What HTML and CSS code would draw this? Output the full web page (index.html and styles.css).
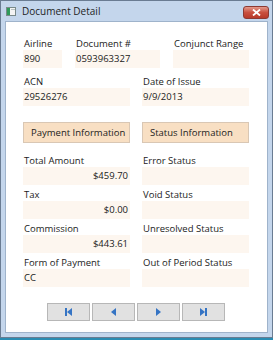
FILE: index.html
```html
<!DOCTYPE html>
<html lang="en">
<head>
  <meta charset="UTF-8">
  <title>Document Detail</title>
  <link rel="stylesheet" href="styles.css">
</head>
<body>
  <div class="window">
    <div class="titlebar">
      <svg class="app-icon" width="10" height="9" viewBox="0 0 10 9">
        <rect x="0.5" y="0.5" width="9" height="8" fill="#f4f4f4" stroke="#7a8a8a"/>
        <rect x="1" y="1" width="3" height="7" fill="#2e9a5a"/>
        <rect x="5" y="2" width="4" height="1" fill="#b9c3c3"/>
      </svg>
      <span class="title">Document Detail</span>
      <div class="close">
        <svg width="9" height="7" viewBox="0 0 9 7">
          <path d="M1 0.5 L8 6.5 M8 0.5 L1 6.5" stroke="#fff" stroke-width="1.8"/>
        </svg>
      </div>
    </div>

    <div class="client">
      <div class="row-three">
        <div class="field">
          <div class="label">Airline</div>
          <div class="value">890</div>
        </div>
        <div class="field">
          <div class="label">Document #</div>
          <div class="value">0593963327</div>
        </div>
        <div class="field">
          <div class="label">Conjunct Range</div>
          <div class="value"></div>
        </div>
      </div>

      <div class="row-two">
        <div class="field">
          <div class="label">ACN</div>
          <div class="value">29526276</div>
        </div>
        <div class="field">
          <div class="label">Date of Issue</div>
          <div class="value">9/9/2013</div>
        </div>
      </div>

      <div class="row-two tabs">
        <button class="tab">Payment Information</button>
        <button class="tab">Status Information</button>
      </div>

      <div class="row-two details">
        <div class="col">
          <div class="field">
            <div class="label">Total Amount</div>
            <div class="value num">$459.70</div>
          </div>
          <div class="field">
            <div class="label">Tax</div>
            <div class="value num">$0.00</div>
          </div>
          <div class="field">
            <div class="label">Commission</div>
            <div class="value num">$443.61</div>
          </div>
          <div class="field">
            <div class="label">Form of Payment</div>
            <div class="value">CC</div>
          </div>
        </div>
        <div class="col">
          <div class="field">
            <div class="label">Error Status</div>
            <div class="value"></div>
          </div>
          <div class="field">
            <div class="label">Void Status</div>
            <div class="value"></div>
          </div>
          <div class="field">
            <div class="label">Unresolved Status</div>
            <div class="value"></div>
          </div>
          <div class="field">
            <div class="label">Out of Period Status</div>
            <div class="value"></div>
          </div>
        </div>
      </div>

      <div class="nav">
        <button class="nav-btn" title="First">
          <svg width="9" height="8" viewBox="0 0 9 8"><rect x="1" y="0" width="2" height="8" fill="#3574c4"/><path d="M8 0 L3 4 L8 8 Z" fill="#3574c4"/></svg>
        </button>
        <button class="nav-btn" title="Previous">
          <svg width="9" height="8" viewBox="0 0 9 8"><path d="M7 0 L2 4 L7 8 Z" fill="#3574c4"/></svg>
        </button>
        <button class="nav-btn" title="Next">
          <svg width="9" height="8" viewBox="0 0 9 8"><path d="M2 0 L7 4 L2 8 Z" fill="#3574c4"/></svg>
        </button>
        <button class="nav-btn" title="Last">
          <svg width="9" height="8" viewBox="0 0 9 8"><path d="M1 0 L6 4 L1 8 Z" fill="#3574c4"/><rect x="6" y="0" width="2" height="8" fill="#3574c4"/></svg>
        </button>
      </div>
    </div>
  </div>
</body>
</html>
```

FILE: styles.css
```css
* {
  box-sizing: border-box;
}
body {
  margin: 0;
  width: 273px;
  height: 340px;
  background: #2a8cb2;
  font-family: "Open Sans", "Noto Sans", sans-serif;
  font-size: 9.5px;
  color: #1b1b1b;
}
.window {
  height: 338px;
  border: 1px solid #6a7c92;
  background: #c4d6ec;
  padding: 0 4px 4px 4px;
  display: flex;
  flex-direction: column;
}
.titlebar {
  height: 20px;
  display: flex;
  align-items: center;
}
.app-icon {
  margin-left: 1px;
  margin-top: 1px;
}
.title {
  margin-left: 6px;
  font-size: 10px;
  color: #1e1e1e;
}
.close {
  margin-left: auto;
  margin-right: -1px;
  margin-top: 2px;
  width: 26px;
  height: 13px;
  border: 1px solid #8c3a33;
  border-radius: 3px;
  background: linear-gradient(#e49a8c, #c9503f 50%, #b83a2a);
  display: flex;
  align-items: center;
  justify-content: center;
}
.client {
  flex: 1;
  background: #fff;
  border: 1px solid #9fb3cb;
  padding: 15px 18px 0 17px;
}
.row-three {
  display: grid;
  grid-template-columns: 39px 85px 76px;
  column-gap: 13px;
  margin-bottom: 7px;
}
.row-two {
  display: grid;
  grid-template-columns: 107px 107px;
  column-gap: 12px;
}
.label {
  height: 13px;
  line-height: 13px;
  white-space: nowrap;
  padding-left: 1px;
}
.value {
  height: 18px;
  line-height: 18px;
  background: #fdf6ef;
  padding: 0 2px 0 1px;
  white-space: nowrap;
}
.value.num {
  text-align: right;
}
.col .field {
  margin-bottom: 3px;
}
.tabs {
  margin-top: 16px;
  margin-bottom: 11px;
}
.tab {
  height: 21px;
  font-family: inherit;
  font-size: 9.5px;
  color: #1b1b1b;
  text-align: left;
  padding: 0 0 0 7px;
  background: #f8dfc3;
  border: 1px solid #d9c7b4;
  border-radius: 0;
}
.details {
  margin-bottom: 13px;
}
.nav {
  display: flex;
  justify-content: center;
  gap: 2px;
  margin-left: -1px;
}
.nav-btn {
  width: 43px;
  height: 18px;
  padding: 0;
  background: #e1e1e1;
  border: 1px solid #b7b7b7;
  border-radius: 0;
  display: flex;
  align-items: center;
  justify-content: center;
}
```
